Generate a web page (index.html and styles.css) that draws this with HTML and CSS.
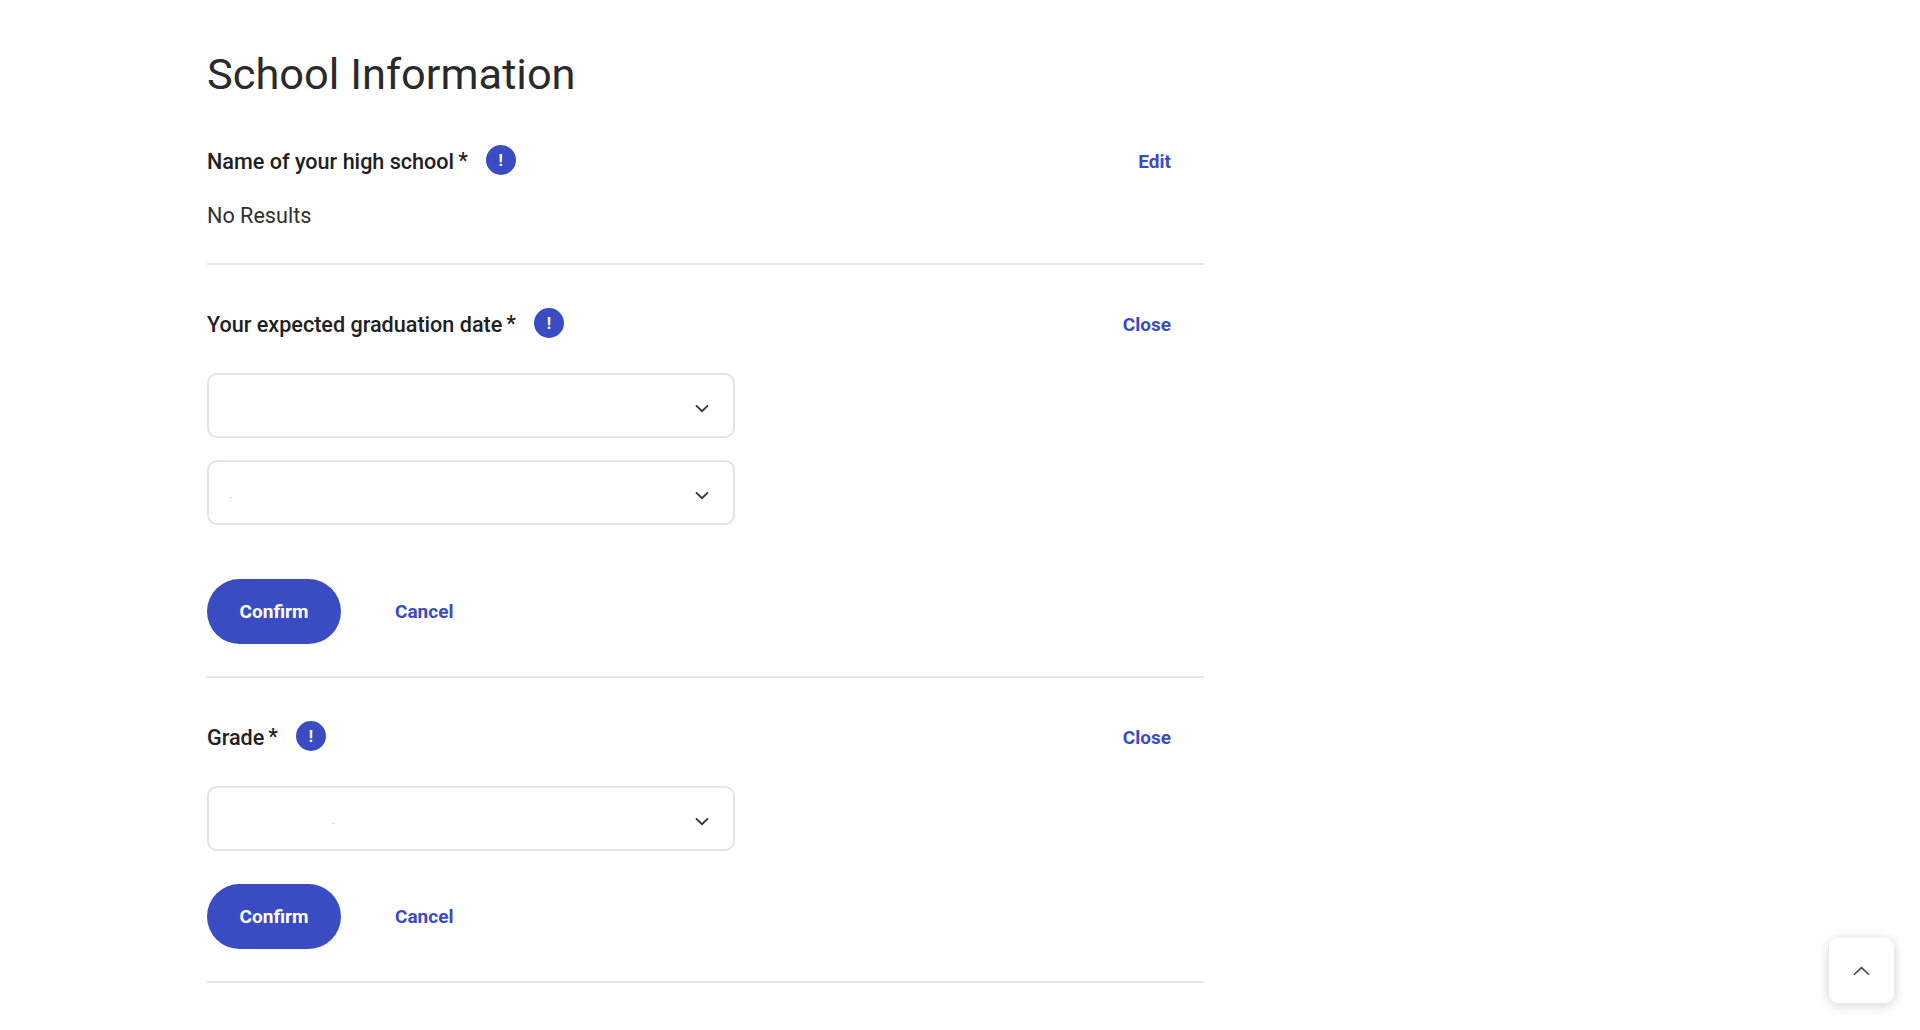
FILE: index.html
```html
<!DOCTYPE html>
<html lang="en">
<head>
<meta charset="utf-8">
<title>School Information</title>
<link rel="stylesheet" href="styles.css">
</head>
<body>
<main class="page">
  <h1 class="title">School Information</h1>

  <section class="section section-first">
    <div class="row">
      <div class="label-wrap"><span class="label">Name of your high school</span><span class="req">*</span><span class="info">!</span></div>
      <a class="link" href="#">Edit</a>
    </div>
    <p class="value">No Results</p>
  </section>

  <section class="section">
    <div class="row">
      <div class="label-wrap"><span class="label">Your expected graduation date</span><span class="req">*</span><span class="info">!</span></div>
      <a class="link" href="#">Close</a>
    </div>
    <div class="fields">
      <div class="select"><svg class="chev" viewBox="0 0 14 9"><path d="M1 1.4 7 7.2 13 1.4"/></svg></div>
      <div class="select"><span class="speck speck-a">.</span><svg class="chev" viewBox="0 0 14 9"><path d="M1 1.4 7 7.2 13 1.4"/></svg></div>
    </div>
    <div class="actions actions-wide">
      <button class="btn">Confirm</button>
      <a class="link" href="#">Cancel</a>
    </div>
  </section>

  <section class="section">
    <div class="row">
      <div class="label-wrap"><span class="label">Grade</span><span class="req">*</span><span class="info">!</span></div>
      <a class="link" href="#">Close</a>
    </div>
    <div class="fields">
      <div class="select"><span class="speck speck-b">.</span><svg class="chev" viewBox="0 0 14 9"><path d="M1 1.4 7 7.2 13 1.4"/></svg></div>
    </div>
    <div class="actions">
      <button class="btn">Confirm</button>
      <a class="link" href="#">Cancel</a>
    </div>
  </section>
</main>
<button class="to-top" aria-label="Back to top"><svg viewBox="0 0 18 10"><path d="M1 9 9 1.4 17 9"/></svg></button>
</body>
</html>
```
FILE: styles.css
```css
* { box-sizing: border-box; }
html, body { margin: 0; padding: 0; background: #fff; }
body { font-family: Roboto, "Liberation Sans", sans-serif; color: #212121; height: 1030px; overflow: hidden; }
.page { width: 997px; margin-left: 207px; padding-top: 48px; }
.title { margin: 0; font-size: 43.4px; line-height: 54px; font-weight: 400; color: #2a2a2a; }
.section { border-bottom: 2px solid #e6e6e6; padding-top: 43px; padding-bottom: 32px; }
.row { display: flex; justify-content: space-between; align-items: center; height: 32px; padding-right: 33px; }
.label-wrap { display: flex; align-items: center; }
.label { font-size: 21.6px; font-weight: 500; line-height: 32px; position: relative; top: 1px; }
.req { font-size: 21.6px; font-weight: 500; line-height: 32px; margin-left: 4px; }
.info { width: 30px; height: 30px; margin-left: 18px; border-radius: 50%; background: #3a4cc1; color: #fff; font-size: 16px; font-weight: 700; display: flex; align-items: center; justify-content: center; position: relative; top: -1px; }
.link { color: #3a4cc1; font-size: 19px; font-weight: 700; text-decoration: none; line-height: 24px; position: relative; top: 1px; }
.value { margin: 23px 0 -1px; font-size: 21.6px; line-height: 32px; color: #303030; }
.fields { display: flex; flex-direction: column; gap: 22px; margin-top: 33px; }
.select { position: relative; width: 528px; height: 65px; border: 2px solid #e3e3e3; border-radius: 10px; background: #fff; }
.chev { position: absolute; right: 24px; top: 29px; width: 14px; height: 9px; fill: none; stroke: #333; stroke-width: 1.8; }
.speck { position: absolute; top: 29px; font-size: 8px; line-height: 10px; color: #8f8f8f; }
.speck-a { left: 21px; }
.speck-b { left: 123px; }
.actions { display: flex; align-items: center; gap: 54px; margin-top: 33px; }
.actions-wide { margin-top: 54px; }
.actions .link { top: 0; }
.btn { width: 134px; height: 65px; border: 0; border-radius: 33px; background: #3a4cc1; color: #fff; font-family: inherit; font-size: 19px; font-weight: 700; padding: 0; }
.to-top { position: fixed; left: 1829px; top: 938px; width: 65px; height: 65px; border: 0; border-radius: 9px; background: #fff; box-shadow: 0 2px 12px rgba(0,0,0,.18); padding: 0; display: flex; align-items: center; justify-content: center; }
.to-top svg { width: 17px; height: 10px; fill: none; stroke: #444; stroke-width: 1.6; }
```
